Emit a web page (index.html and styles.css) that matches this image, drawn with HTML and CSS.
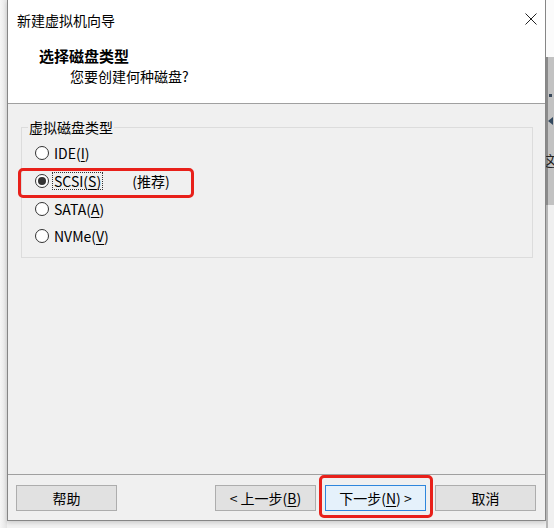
FILE: index.html
```html
<!DOCTYPE html>
<html lang="zh-CN">
<head>
<meta charset="utf-8">
<title>新建虚拟机向导</title>
<link rel="stylesheet" href="styles.css">
</head>
<body>
<div class="desk">
  <div class="shadow-left"></div>
  <div class="window">
    <div class="top">
      <div class="titlebar">
        <span class="title">新建虚拟机向导</span>
        <svg class="close" width="12" height="12" viewBox="0 0 12 12"><path d="M0.5 0.5 L11.5 11.5 M11.5 0.5 L0.5 11.5" stroke="#222" stroke-width="1" fill="none"/></svg>
      </div>
      <div class="header">
        <div class="heading">选择磁盘类型</div>
        <div class="subtitle">您要创建何种磁盘?</div>
      </div>
    </div>
    <div class="content">
      <fieldset class="group">
        <legend>虚拟磁盘类型</legend>
        <div class="row"><span class="radio"></span><span class="lbl">IDE(<u>I</u>)</span></div>
        <div class="row"><span class="radio checked"></span><span class="lbl focus">SCSI(<u>S</u>)</span><span class="rec">(推荐)</span></div>
        <div class="row"><span class="radio"></span><span class="lbl">SATA(<u>A</u>)</span></div>
        <div class="row"><span class="radio"></span><span class="lbl">NVMe(<u>V</u>)</span></div>
      </fieldset>
    </div>
    <div class="footer">
      <button class="btn">帮助</button>
      <div class="spacer"></div>
      <button class="btn">&lt; 上一步(<u>B</u>)</button>
      <button class="btn default">下一步(<u>N</u>) &gt;</button>
      <button class="btn">取消</button>
    </div>
  </div>
  <div class="strip">
    <div class="strip-white"></div>
    <div class="strip-gray">
      <span class="dot"></span>
      <span class="tri"></span>
      <span class="glyph">这</span>
    </div>
    <div class="strip-light"></div>
  </div>
</div>
<div class="mark mark-scsi"></div>
<div class="mark mark-next"></div>
</body>
</html>
```

FILE: styles.css
```css
* { box-sizing: border-box; }
html, body { margin: 0; padding: 0; }
body {
  width: 554px;
  height: 528px;
  overflow: hidden;
  position: relative;
  background: #f1f1f1;
  font-family: "Noto Sans CJK SC", "Noto Sans", sans-serif;
  font-size: 14px;
  color: #000;
}
.desk { display: flex; height: 528px; }
.shadow-left {
  width: 7px;
  background: linear-gradient(to right, #f6f6f6, #e4e4e4);
}
.window {
  width: 539px;
  height: 521px;
  border-left: 1px solid #868686;
  border-right: 1px solid #868686;
  border-bottom: 1px solid #868686;
  background: #f0f0f0;
  display: flex;
  flex-direction: column;
  box-shadow: 0 2px 4px rgba(0,0,0,0.15);
}
.top {
  background: #fff;
  height: 104px;
  border-bottom: 1px solid #a0a0a0;
}
.titlebar {
  height: 40px;
  display: flex;
  align-items: center;
  justify-content: space-between;
  padding: 0 8px 0 9px;
}
.title { line-height: 20px; }
.close { display: block; margin-top: -2px; }
.header { padding: 6px 0 0 31px; }
.heading { font-weight: bold; font-size: 15px; line-height: 20px; }
.subtitle { padding-left: 31px; line-height: 20px; }
.content {
  flex: 1;
  padding: 13px 12px 0 13px;
}
.group {
  margin: 0;
  border: 1px solid #dcdcdc;
  padding: 2px 0 7px 13px;
  min-width: 0;
}
.group legend {
  margin-left: -7px;
  padding: 0 1px;
  line-height: 20px;
}
.row {
  height: 28px;
  display: flex;
  align-items: center;
}
.row:nth-of-type(3) { height: 27px; }
.radio {
  width: 14px;
  height: 14px;
  border: 1px solid #333;
  border-radius: 50%;
  background: #fff;
  display: flex;
  align-items: center;
  justify-content: center;
  flex: none;
}
.radio.checked::after {
  content: "";
  width: 8px;
  height: 8px;
  border-radius: 50%;
  background: #333;
}
.lbl {
  margin-left: 3px;
  padding: 0 1px;
  line-height: 16px;
  border: 1px dotted transparent;
}
.lbl.focus { border-color: #333; }
.rec { margin-left: 29px; line-height: 16px; }
u { text-underline-offset: 2px; }
.footer {
  height: 46px;
  border-top: 1px solid #a0a0a0;
  display: flex;
  align-items: flex-start;
  padding: 10px 9px 0 8px;
}
.spacer { flex: 1; }
.btn {
  width: 101px;
  height: 26px;
  margin: 0;
  padding: 0;
  border: 1px solid #adadad;
  background: #e1e1e1;
  font-family: "Noto Sans CJK SC", "Noto Sans", sans-serif;
  font-size: 14px;
  color: #000;
  line-height: 22px;
}
.btn.default {
  margin-left: 9px;
  background: #e5f1fb;
  border-color: #2f86dc;
}
.btn.default + .btn { margin-left: 9px; }
.strip {
  width: 8px;
  display: flex;
  flex-direction: column;
  overflow: hidden;
}
.strip-white { height: 57px; background: #fbfbfb; }
.strip-gray {
  height: 148px;
  background: #c2c2c2;
  border-left: 2px solid #8a8a8a;
  display: flex;
  flex-direction: column;
  align-items: flex-start;
  position: relative;
}
.dot {
  width: 3px;
  height: 3px;
  background: #3a4a5c;
  margin: 37px 0 0 1px;
}
.tri {
  width: 0;
  height: 0;
  border-top: 4px solid transparent;
  border-bottom: 4px solid transparent;
  border-right: 5px solid #34495e;
  margin: 20px 0 0 0;
}
.glyph {
  margin: 27px 0 0 -6px;
  font-size: 14px;
  line-height: 16px;
  color: #222;
  white-space: nowrap;
}
.strip-light { flex: 1; background: #f0f0f0; border-left: 2px solid #b5b5b5; }
.mark {
  position: absolute;
  border: 3px solid #e8201a;
  border-radius: 5px;
}
.mark-scsi { left: 18px; top: 168px; width: 176px; height: 30px; }
.mark-next { left: 319px; top: 475px; width: 114px; height: 43px; }
```
